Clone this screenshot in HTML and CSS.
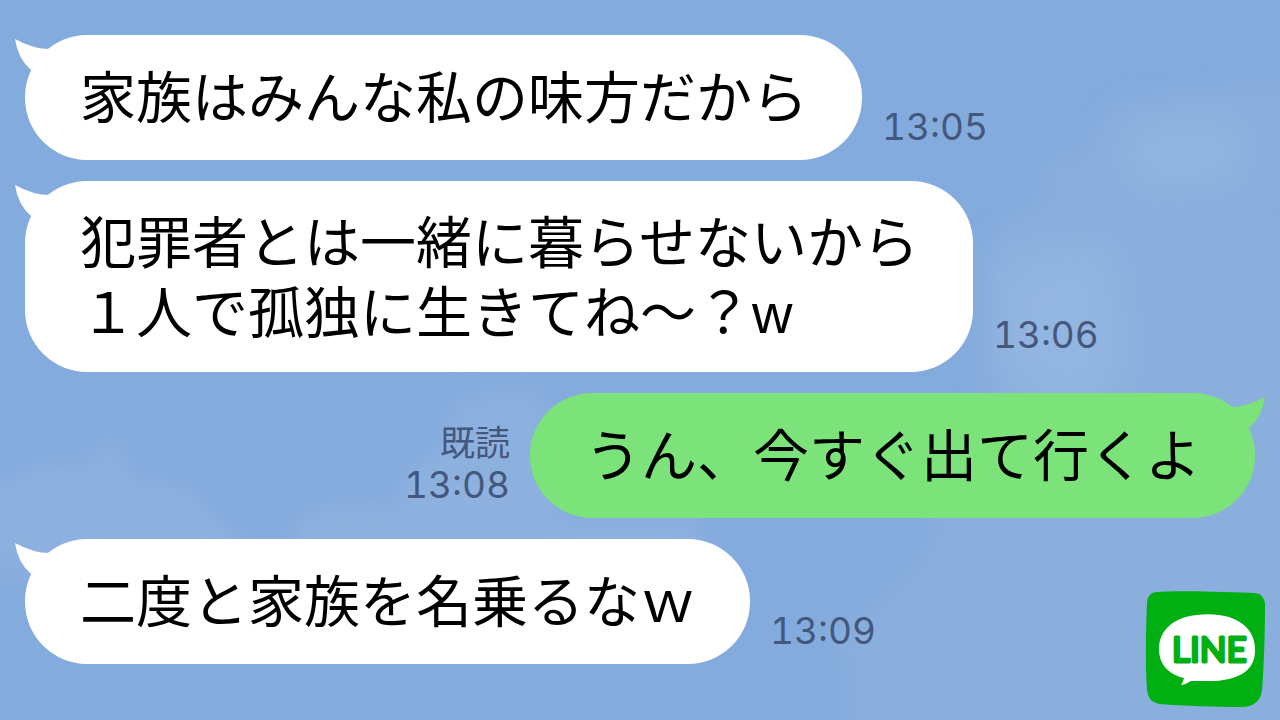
FILE: index.html
```html
<!DOCTYPE html>
<html lang="ja">
<head>
<meta charset="utf-8">
<meta name="viewport" content="width=device-width, initial-scale=1">
<title>トーク</title>
<link rel="stylesheet" href="styles.css">
</head>
<body>
<svg class="sky" viewBox="0 0 1280 720" preserveAspectRatio="none" aria-hidden="true">
  <defs>
    <filter id="soft" x="-20%" y="-20%" width="140%" height="140%"><feGaussianBlur stdDeviation="10"/></filter>
    <filter id="wide" x="-30%" y="-30%" width="160%" height="160%"><feGaussianBlur stdDeviation="22"/></filter>
    <linearGradient id="fade" x1="0" y1="0" x2="0" y2="1">
      <stop offset="0" stop-color="#8cb0df"/>
      <stop offset="0.7" stop-color="#8eb1df"/>
      <stop offset="1" stop-color="#84abde"/>
    </linearGradient>
  </defs>
  <path filter="url(#soft)" fill="#8aafdd" d="M990 400 L985 260 L1010 215 L1040 205 L1045 165 L1085 150 L1110 110 L1160 100 L1230 88 L1300 80 L1300 740 L850 740 L840 640 L920 560 Z"/>
  <path filter="url(#wide)" fill="#93b5e1" d="M1130 125 L1240 120 L1240 180 L1130 190 Z M1000 260 L1110 240 L1130 370 L1080 420 L1000 380 Z"/>
  <path filter="url(#soft)" fill="url(#fade)" d="M-20 490 L0 486 L45 462 L92 462 L102 442 L120 438 L130 478 L185 486 L240 540 L290 545 L300 512 L365 502 L390 512 L410 470 L450 440 L450 400 L540 385 L560 520 L700 520 L700 600 L-20 600 Z"/>
</svg>

<main class="chat">
  <div class="row">
    <p class="bubble">
      <svg class="tail" viewBox="0 0 56 50" aria-hidden="true"><path d="M0 4 Q18 14 35 14 L50 26 L24 48 L16 35 Q3 24 0 4Z"/></svg>家族はみんな私の味方だから
    </p>
    <div class="meta"><time datetime="13:05">13:05</time></div>
  </div>

  <div class="row row-long">
    <p class="bubble">
      <svg class="tail" viewBox="0 0 56 50" aria-hidden="true"><path d="M0 4 Q18 14 35 14 L50 26 L24 48 L16 35 Q3 24 0 4Z"/></svg>犯罪者とは一緒に暮らせないから<br>１人で孤独に生きてね〜？w
    </p>
    <div class="meta"><time datetime="13:06">13:06</time></div>
  </div>

  <div class="row row-own">
    <p class="bubble">
      <svg class="tail" viewBox="0 0 56 50" aria-hidden="true"><path d="M0 4 Q18 14 35 14 L50 26 L24 48 L16 35 Q3 24 0 4Z"/></svg>うん、今すぐ出て行くよ
    </p>
    <div class="meta"><span class="read">既読</span><time datetime="13:08">13:08</time></div>
  </div>

  <div class="row">
    <p class="bubble">
      <svg class="tail" viewBox="0 0 56 50" aria-hidden="true"><path d="M0 4 Q18 14 35 14 L50 26 L24 48 L16 35 Q3 24 0 4Z"/></svg>二度と家族を名乗るなｗ
    </p>
    <div class="meta"><time datetime="13:09">13:09</time></div>
  </div>
</main>

<svg class="logo" viewBox="0 0 120 118" role="img" aria-label="LINE">
  <path fill="#00af12" d="M11 2 C35 0 86 2 110 3 Q119 4 120 14 C120 42 119 74 117 100 Q115 116 98 117 C70 117 40 116 14 114 Q3 112 2 100 C0 72 1 40 2 12 Q3 3 11 2Z"/>
  <path fill="#fff" d="M52 25 C88 21 111 36 110 61 C110 83 89 92 60 91 L46 91 Q42 94 36 95 Q38 92 39 88 C22 84 14 73 14 59 C14 40 29 27 52 25Z"/>
  <text class="logo-text" x="27" y="72">LINE</text>
</svg>
</body>
</html>
```
FILE: styles.css
```css
* {
  box-sizing: border-box;
}

body {
  margin: 0;
  min-height: 100vh;
  position: relative;
  overflow-x: hidden;
  background: #84abde;
  color: #000;
  font-family: "Liberation Sans", "Noto Sans CJK JP", sans-serif;
}

.sky {
  position: absolute;
  inset: 0;
  width: 100%;
  height: 100%;
}

.chat {
  position: relative;
  display: flex;
  flex-direction: column;
  gap: 21px;
  padding: 35px 25px;
}

.row {
  display: flex;
  align-items: flex-end;
  gap: 20px;
}

.row-own {
  flex-direction: row-reverse;
}

.bubble {
  position: relative;
  margin: 0;
  padding: 29px 54px 26px 55px;
  border-radius: 62px;
  background: #fff;
  font-size: 56px;
  font-weight: 400;
  line-height: 70px;
  white-space: nowrap;
}

.row-long .bubble {
  padding-top: 28px;
  padding-bottom: 23px;
}

.row-own .bubble {
  background: #7be37a;
}

.tail {
  position: absolute;
  top: 0;
  left: -10px;
  width: 56px;
  height: 50px;
  fill: #fff;
}

.row-own .tail {
  left: auto;
  right: -10px;
  transform: scaleX(-1);
  fill: #7be37a;
}

.meta {
  display: flex;
  flex-direction: column;
  padding-bottom: 12px;
  color: #44587d;
  font-family: Inter, "Noto Sans CJK JP", sans-serif;
  font-size: 37px;
  font-variant-numeric: tabular-nums;
  line-height: 42px;
}

.row-long .meta {
  padding-bottom: 16px;
}

.row-own .meta {
  align-items: flex-end;
}

.read {
  font-size: 35px;
}

.logo {
  position: absolute;
  right: 15px;
  bottom: 12px;
  width: 120px;
  height: 118px;
}

.logo-text {
  fill: #00af12;
  stroke: #00af12;
  stroke-width: 3;
  stroke-linejoin: round;
  font-family: Lato, sans-serif;
  font-size: 35px;
  font-weight: 400;
}
```
